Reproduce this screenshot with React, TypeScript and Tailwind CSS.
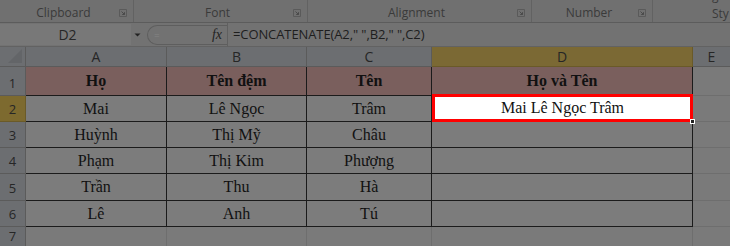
import React from 'react';

const Launcher = () => (
  <svg width="8" height="8" viewBox="0 0 8 8" className="shrink-0 mb-[2px]">
    <path d="M0.5 0.5h7v7h-7z" fill="none" stroke="#5a5a5a" strokeWidth="1" />
    <path d="M2.5 2.5l3 3M5.5 3.2v2.3h-2.3" fill="none" stroke="#4a4a4a" strokeWidth="1" />
  </svg>
);

const groups = [
  { label: 'Clipboard', w: 'w-[134px]' },
  { label: 'Font', w: 'w-[174px]' },
  { label: 'Alignment', w: 'w-[224px]' },
  { label: 'Number', w: 'w-[121px]' },
];

const rows = [
  ['Mai', 'Lê Ngọc', 'Trâm'],
  ['Huỳnh', 'Thị Mỹ', 'Châu'],
  ['Phạm', 'Thị Kim', 'Phượng'],
  ['Trần', 'Thu', 'Hà'],
  ['Lê', 'Anh', 'Tú'],
];

const serif = "font-['Liberation_Serif','Times_New_Roman',serif]";

export default function App() {
  return (
    <div className="w-[730px] h-[246px] overflow-hidden bg-[#707070] font-['Open_Sans','Noto_Sans',sans-serif] text-[#3a3a3a]">
      {/* ribbon group labels */}
      <div className="flex h-[23px] border-b border-[#5c5c5c]">
        {groups.map((g) => (
          <div key={g.label} className={`${g.w} flex items-end border-r border-[#626262] pl-2 pr-[6px] pb-[3px]`}>
            <span className="flex-1 text-center text-[12px] leading-none">{g.label}</span>
            <Launcher />
          </div>
        ))}
        <div className="relative flex-1 overflow-hidden">
          <div className="absolute left-[4px] top-[-10px] text-[12px] leading-none whitespace-nowrap">Formatting</div>
          <div className="absolute left-[66px] top-[-10px] text-[12px] leading-none">as</div>
          <div className="absolute left-[59px] top-[8px] text-[12px] leading-none">Sty</div>
        </div>
      </div>

      {/* formula bar */}
      <div className="flex h-[24px] items-center bg-[#727272] border-b border-[#626262]">
        <div className="w-[131px] h-[21px] flex items-center justify-center bg-[#787878] text-[14px] text-[#262626]">
          <span className="pl-[4px]">D2</span>
        </div>
        <svg width="14" height="8" viewBox="0 0 14 8" className="ml-[1px]">
          <path d="M2.5 2.5h6l-3 3z" fill="#222" />
        </svg>
        <div className="ml-[1px] w-[80px] h-[20px] flex items-center justify-between rounded-l-full border border-r-0 border-[#5e5e5e] bg-[#727272] pl-[6px] pr-[5px]">
          <span className="text-[10px] leading-none text-[#858585]">=</span>
          <span className={`${serif} italic text-[14px] leading-none text-[#222]`}>fx</span>
        </div>
        <div className="h-[24px] border-l border-[#606060]" />
        <div className="pl-[5px] text-[13px] tracking-[-0.1px] text-[#1e1e1e] whitespace-nowrap">=CONCATENATE(A2," ",B2," ",C2)</div>
      </div>

      {/* sheet */}
      <div className="grid grid-cols-[26px_141px_140px_125px_261px_1fr] grid-rows-[20px_29px_26px_26px_26px_27px_26px_26px]">
        <div className="bg-[#6c6e71] border-r border-b border-[#5b5b5b] flex items-end justify-end p-[3px]">
          <svg width="14" height="14" viewBox="0 0 14 14">
            <path d="M14 0v14h-14z" fill="#636568" />
          </svg>
        </div>
        {['A', 'B', 'C'].map((c) => (
          <div key={c} className="bg-[#6c6e71] border-r border-b border-[#5b5b5b] flex items-center justify-center text-[14px] text-[#262626]">{c}</div>
        ))}
        <div className="bg-[#7b6934] border-r border-b border-[#6a5a28] flex items-center justify-center text-[14px] text-[#262626]">D</div>
        <div className="bg-[#6c6e71] border-b border-[#5b5b5b] flex items-center justify-center text-[14px] text-[#262626]">E</div>

        {/* row 1 */}
        <div className="bg-[#6c6e71] border-r border-b border-[#5b5b5b] flex items-end justify-center pb-[2px] text-[13px] text-[#262626]">1</div>
        {['Họ', 'Tên đệm', 'Tên', 'Họ và Tên'].map((h) => (
          <div key={h} className={`bg-[#7a5f5d] border-r border-b border-[#1b1b1b] flex items-center justify-center ${serif} font-bold text-[16px] text-[#111]`}>{h}</div>
        ))}
        <div className="bg-[#7a7a7a] border-b border-[#6e6e6e]" />

        {rows.map((r, i) => (
          <React.Fragment key={i}>
            <div className={`${i === 0 ? 'bg-[#7d6a2f] border-[#6a5a28]' : 'bg-[#6c6e71] border-[#5b5b5b]'} border-r border-b flex items-end justify-center pb-[2px] text-[13px] text-[#262626]`}>{i + 2}</div>
            {r.map((v, j) => (
              <div key={j} className={`bg-[#7c7c7c] border-r border-b border-[#1b1b1b] flex items-center justify-center ${serif} text-[16px] text-[#111]`}>{v}</div>
            ))}
            {i === 0 ? (
              <div className="relative bg-[#7c7c7c] border-r border-b border-[#1b1b1b]">
                <div className={`absolute left-0 right-[-1px] top-[-2px] bottom-[-1px] bg-white border-[3px] border-[#ff0000] flex items-center justify-center ${serif} text-[16px] text-[#111]`}>
                  Mai Lê Ngọc Trâm
                </div>
                <div className="absolute right-[-3px] bottom-[-3px] w-[5px] h-[5px] bg-[#222] border border-white" />
              </div>
            ) : (
              <div className="bg-[#7c7c7c] border-r border-b border-[#1b1b1b]" />
            )}
            <div className="bg-[#7a7a7a] border-b border-[#6e6e6e]" />
          </React.Fragment>
        ))}

        {/* row 7 */}
        <div className="bg-[#6c6e71] border-r border-[#5b5b5b] flex items-start justify-center pt-[1px] text-[13px] leading-[17px] text-[#262626]">7</div>
        {[0, 1, 2, 3].map((k) => (
          <div key={k} className="bg-[#7a7a7a] border-r border-[#6e6e6e]" />
        ))}
        <div className="bg-[#7a7a7a]" />
      </div>
    </div>
  );
}
